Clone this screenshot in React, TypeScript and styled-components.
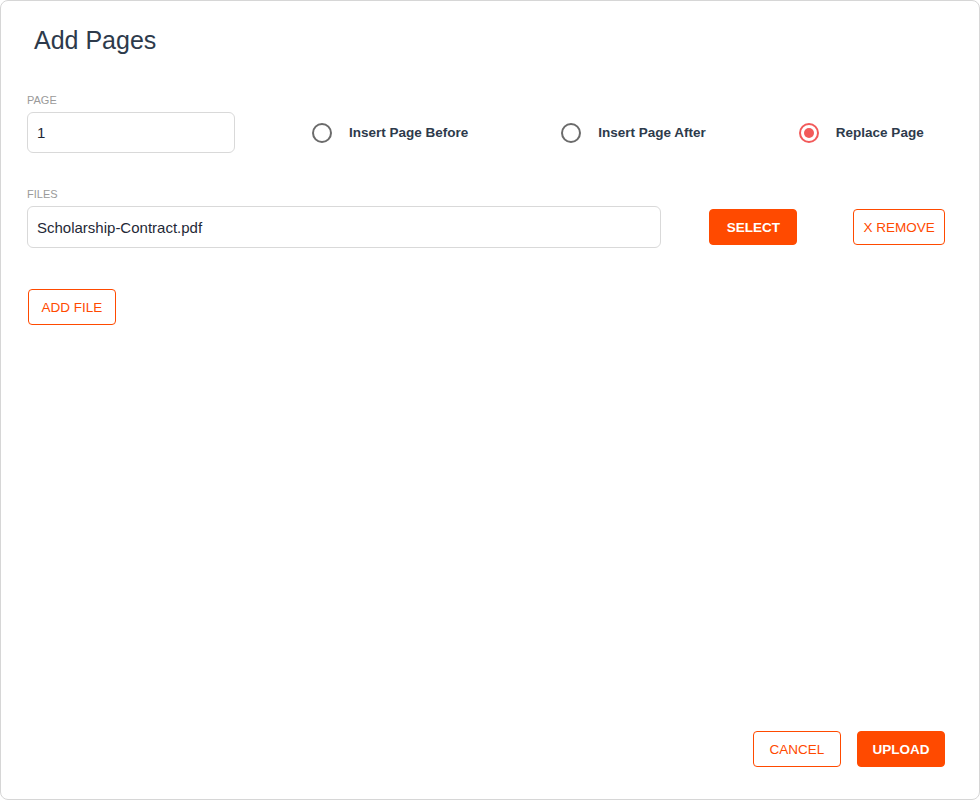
import React from "react";
import styled, { createGlobalStyle } from "styled-components";

const Global = createGlobalStyle`
  html, body { margin: 0; padding: 0; background: #fff; }
  body { font-family: "Liberation Sans", Arial, sans-serif; }
`;

const Dialog = styled.div`
  box-sizing: border-box;
  width: 980px;
  height: 800px;
  border: 1px solid #d6d6d6;
  border-radius: 8px;
  padding: 24px 34px 32px 26px;
  display: flex;
  flex-direction: column;
`;

const Title = styled.h1`
  margin: 0 0 0 7px;
  font-weight: 400;
  font-size: 25px;
  color: #2d3a4b;
  line-height: 30px;
`;

const Label = styled.div`
  font-size: 11px;
  color: #9a9a9a;
  margin-top: ${(p: { top: number }) => p.top}px;
  margin-bottom: 6px;
`;

const Row = styled.div`
  display: flex;
  align-items: center;
`;

const TextBox = styled.div<{ w: number }>`
  box-sizing: border-box;
  width: ${(p) => p.w}px;
  height: ${(p) => (p.w < 300 ? 41 : 42)}px;
  border: 1px solid #d9d9d9;
  border-radius: 6px;
  padding: 0 9px;
  display: flex;
  align-items: center;
  font-size: 15px;
  color: #1f2937;
`;

const Radio = styled.label`
  display: flex;
  align-items: center;
  gap: 17px;
  font-size: 13.5px;
  font-weight: 700;
  color: #2d3a4b;
`;

const Circle = styled.span<{ on?: boolean }>`
  box-sizing: border-box;
  width: 20px;
  height: 20px;
  border-radius: 50%;
  border: 2px solid ${(p) => (p.on ? "#f25a5a" : "#6b6b6b")};
  display: flex;
  align-items: center;
  justify-content: center;
  &::after {
    content: "";
    display: ${(p) => (p.on ? "block" : "none")};
    width: 10px;
    height: 10px;
    border-radius: 50%;
    background: #f25a5a;
  }
`;

const Btn = styled.button<{ solid?: boolean; w: number }>`
  box-sizing: border-box;
  width: ${(p) => p.w}px;
  height: 36px;
  border-radius: 4px;
  border: 1px solid #ff4a00;
  background: ${(p) => (p.solid ? "#ff4a00" : "#fff")};
  color: ${(p) => (p.solid ? "#fff" : "#ff4a00")};
  font-family: "Liberation Sans", Arial, sans-serif;
  font-size: 13.5px;
  font-weight: ${(p) => (p.solid ? 700 : 400)};
  padding: 0;
`;

const Footer = styled.div`
  margin-top: auto;
  display: flex;
  justify-content: flex-end;
  gap: 16px;
`;

export default function App() {
  return (
    <>
      <Global />
      <Dialog>
        <Title>Add Pages</Title>
        <Label top={39}>PAGE</Label>
        <Row>
          <TextBox w={208}>1</TextBox>
          <Row style={{ marginLeft: 77 }}>
            <Radio><Circle />Insert Page Before</Radio>
          </Row>
          <Row style={{ marginLeft: 93 }}>
            <Radio><Circle />Insert Page After</Radio>
          </Row>
          <Row style={{ marginLeft: 93 }}>
            <Radio><Circle on />Replace Page</Radio>
          </Row>
        </Row>
        <Label top={35}>FILES</Label>
        <Row>
          <TextBox w={636}>Scholarship-Contract.pdf</TextBox>
          <Btn solid w={88} style={{ marginLeft: 48 }}>SELECT</Btn>
          <Btn w={92} style={{ marginLeft: 56 }}>X REMOVE</Btn>
        </Row>
        <Row style={{ marginTop: 41, marginLeft: 1 }}>
          <Btn w={88}>ADD FILE</Btn>
        </Row>
        <Footer>
          <Btn w={88}>CANCEL</Btn>
          <Btn solid w={88} style={{ marginLeft: 0 }}>UPLOAD</Btn>
        </Footer>
      </Dialog>
    </>
  );
}
